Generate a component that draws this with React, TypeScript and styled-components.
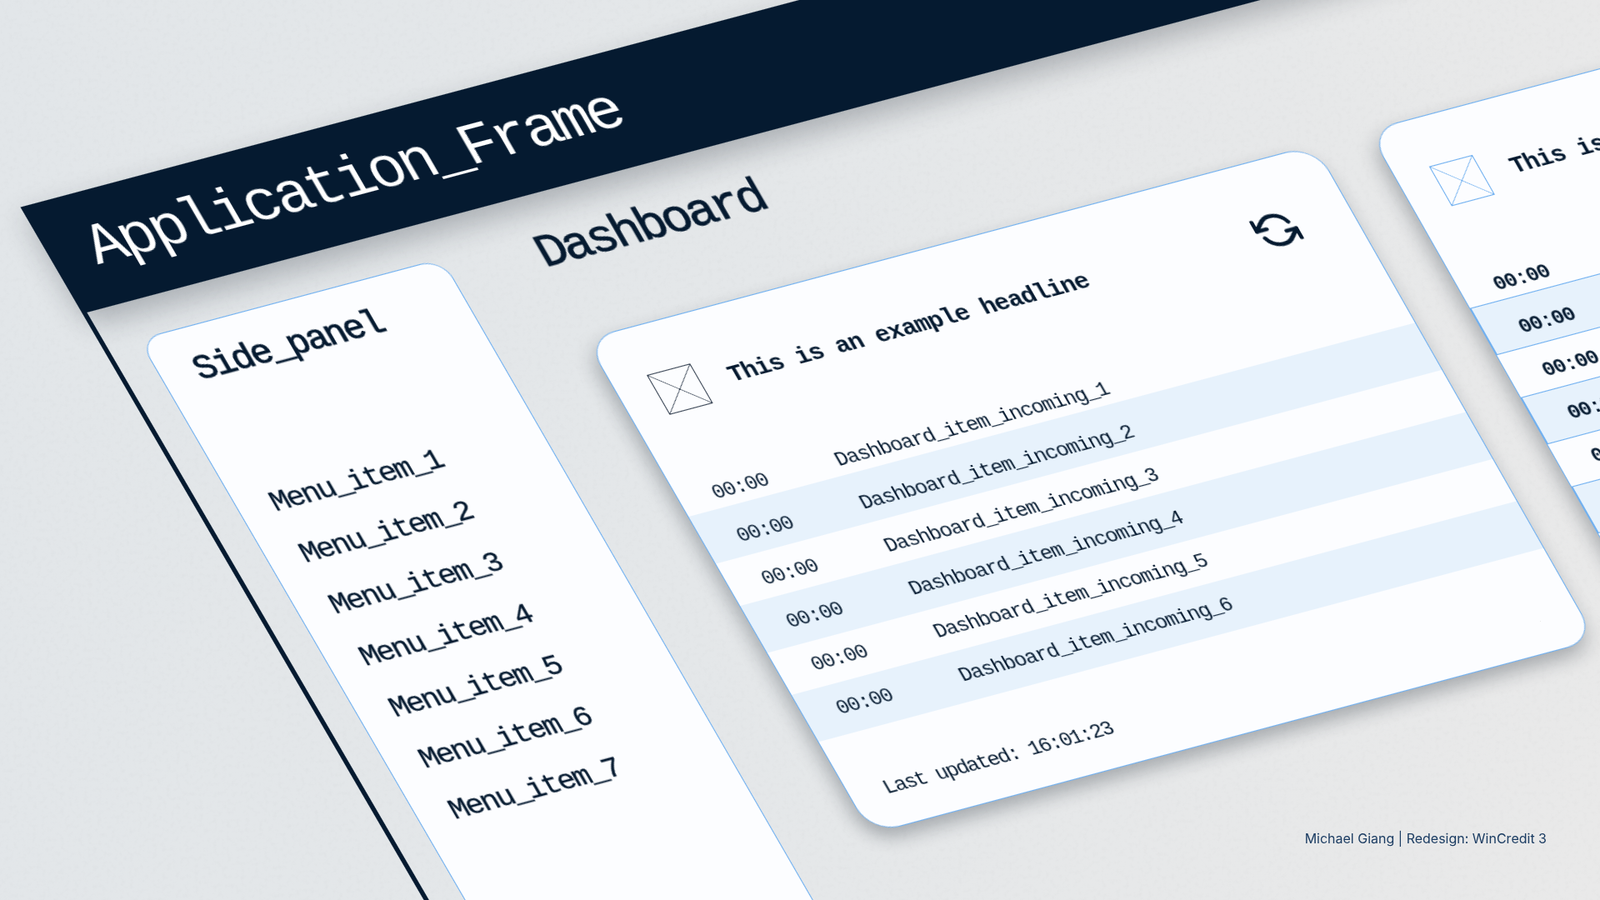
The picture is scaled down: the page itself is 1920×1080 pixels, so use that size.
import styled, { createGlobalStyle } from "styled-components";
import { FiRefreshCcw } from "react-icons/fi";

const NAVY = "#051a30";
const LINE = "#70b0f0";
const STRIPE = "#e7f2fc";
const PAPER = "#fcfdff";

// the frame's reference rectangle and where its corners land on screen
const PLANE = { w: 1270, h: 892 };
const QUAD = { tl: [24.5, 248.6], tr: [1410, -120], bl: [540, 1134], br: [1915, 766] };

const planeMatrix = () => {
  const { tl, tr, bl, br } = QUAD;
  const dx1 = tr[0] - br[0];
  const dy1 = tr[1] - br[1];
  const dx2 = bl[0] - br[0];
  const dy2 = bl[1] - br[1];
  const sx = tl[0] - tr[0] + br[0] - bl[0];
  const sy = tl[1] - tr[1] + br[1] - bl[1];
  const det = dx1 * dy2 - dx2 * dy1;
  const g = (sx * dy2 - dx2 * sy) / det;
  const h = (dx1 * sy - sx * dy1) / det;
  const a = tr[0] - tl[0] + g * tr[0];
  const b = bl[0] - tl[0] + h * bl[0];
  const d = tr[1] - tl[1] + g * tr[1];
  const e = bl[1] - tl[1] + h * bl[1];
  const { w, h: ph } = PLANE;
  const m = [a / w, d / w, 0, g / w, b / ph, e / ph, 0, h / ph, 0, 0, 1, 0, tl[0], tl[1], 0, 1];
  return `matrix3d(${m.map((v) => v.toFixed(8)).join(",")})`;
};

const menuItems = [1, 2, 3, 4, 5, 6, 7];

// stripes are taller than the white rows, and the text drifts up through them
const rows = [
  { n: 1, height: 51.5, nudge: 18 },
  { n: 2, height: 56.5, nudge: 14 },
  { n: 3, height: 51.5, nudge: 10 },
  { n: 4, height: 56.5, nudge: 6 },
  { n: 5, height: 51.5, nudge: 2 },
  { n: 6, height: 56.5, nudge: 0 },
];

function PlaceholderIcon({ color }: { color: string }) {
  return (
    <svg width="48" height="48" viewBox="0 0 48 48" fill="none" stroke={color} strokeWidth="1">
      <rect x="0.5" y="0.5" width="47" height="47" />
      <path d="M0.5 0.5L47.5 47.5M47.5 0.5L0.5 47.5" />
    </svg>
  );
}

function DashCard({ outlined }: { outlined?: boolean }) {
  return (
    <Card>
      <CardHead>
        <PlaceholderIcon color={outlined ? LINE : "#3a4656"} />
        <Headline>This is an example headline</Headline>
        <RefreshButton>
          <FiRefreshCcw size={44} strokeWidth={2.4} />
        </RefreshButton>
      </CardHead>
      <RowList>
        {rows.map(({ n, height, nudge }) => (
          <Row key={n} $striped={n % 2 === 0} $outlined={outlined} $height={height} $nudge={nudge}>
            <Time $outlined={outlined}>00:00</Time>
            <ItemName>Dashboard_item_incoming_{n}</ItemName>
          </Row>
        ))}
      </RowList>
      <Updated>Last updated: 16:01:23</Updated>
    </Card>
  );
}

export default function App() {
  return (
    <Stage>
      <GlobalStyle />
      <Grain aria-hidden="true">
        <filter id="grain">
          <feTurbulence type="fractalNoise" baseFrequency="0.18" numOctaves="4" seed="7" />
          <feColorMatrix values="0 0 0 0 0.35  0 0 0 0 0.35  0 0 0 0 0.35  0 0 0 -1.6 0.82" />
        </filter>
        <rect width="100%" height="100%" filter="url(#grain)" />
      </Grain>
      <Frame>
        <Header>
          <AppTitle>Application_Frame</AppTitle>
        </Header>
        <Body>
          <SidePanel>
            <PanelTitle>Side_panel</PanelTitle>
            <Menu>
              {menuItems.map((n) => (
                <MenuItem key={n}>Menu_item_{n}</MenuItem>
              ))}
            </Menu>
          </SidePanel>
          <Main>
            <PageTitle>Dashboard</PageTitle>
            <CardRow>
              <DashCard />
              <DashCard outlined />
            </CardRow>
          </Main>
        </Body>
      </Frame>
      <Credit>Michael Giang | Redesign: WinCredit 3</Credit>
    </Stage>
  );
}

const GlobalStyle = createGlobalStyle`
  html, body {
    margin: 0;
    padding: 0;
    overflow: hidden;
  }
`;

const Stage = styled.div`
  position: relative;
  width: 1920px;
  height: 1080px;
  overflow: hidden;
  background: linear-gradient(100deg, #e2e6e9 0%, #e4e7e9 45%, #e9e9e9 100%);
  font-family: "Liberation Mono", monospace;
  color: ${NAVY};
`;

const Grain = styled.svg`
  position: absolute;
  inset: 0;
  width: 100%;
  height: 100%;
  opacity: 0.07;
`;

const Frame = styled.div`
  width: 2500px;
  height: 1500px;
  display: flex;
  flex-direction: column;
  transform-origin: 0 0;
  transform: ${planeMatrix()};
`;

const Header = styled.header`
  flex: none;
  height: 128px;
  display: flex;
  align-items: center;
  padding-left: 42px;
  background: ${NAVY};
  box-shadow: 0 14px 30px rgba(20, 30, 40, 0.28);
`;

const AppTitle = styled.h1`
  margin: 0;
  font-size: 64px;
  letter-spacing: -4.2px;
  font-weight: 400;
  color: #ffffff;
`;

const Body = styled.div`
  flex: 1;
  display: flex;
  gap: 92px;
  padding: 42px 0 0 34px;
  border-left: 5px solid ${NAVY};
`;

const SidePanel = styled.aside`
  flex: none;
  box-sizing: border-box;
  width: 334px;
  height: 1300px;
  padding: 28px 36px;
  background: ${PAPER};
  border: 1.5px solid ${LINE};
  border-radius: 24px;
`;

const PanelTitle = styled.h2`
  margin: 0;
  font-size: 38px;
  letter-spacing: -2.4px;
  line-height: 42px;
  font-weight: 400;
  -webkit-text-stroke: 0.9px ${NAVY};
`;

const Menu = styled.nav`
  display: flex;
  flex-direction: column;
  margin: 108px 0 0 -1px;
`;

const MenuItem = styled.a`
  font-size: 32px;
  letter-spacing: -2.3px;
  line-height: 62.2px;
  -webkit-text-stroke: 0.3px ${NAVY};
`;

const Main = styled.main`
  flex: none;
  display: flex;
  flex-direction: column;
`;

const PageTitle = styled.h2`
  margin: 0 0 0 2px;
  height: 124px;
  box-sizing: border-box;
  font-size: 52px;
  letter-spacing: -3.9px;
  line-height: 50px;
  font-weight: 400;
  -webkit-text-stroke: 0.8px ${NAVY};
`;

const CardRow = styled.div`
  display: flex;
  gap: 59px;
`;

const Card = styled.section`
  flex: none;
  box-sizing: border-box;
  width: 805px;
  height: 600px;
  padding-top: 54px;
  display: flex;
  flex-direction: column;
  overflow: hidden;
  background: ${PAPER};
  border: 1.5px solid ${LINE};
  border-radius: 32px;
  box-shadow: -6px 10px 20px rgba(20, 30, 40, 0.3);
`;

const CardHead = styled.div`
  display: flex;
  align-items: center;
  gap: 31px;
  height: 48px;
  padding: 0 60px 0 38px;
`;

const Headline = styled.h3`
  flex: 1;
  margin: 0;
  font-size: 26px;
  letter-spacing: -0.95px;
  font-weight: 700;
`;

const RefreshButton = styled.div`
  display: flex;
  color: ${NAVY};
`;

const RowList = styled.div`
  margin-top: 60.5px;
  display: flex;
  flex-direction: column;
`;

const Row = styled.div<{ $striped?: boolean; $outlined?: boolean; $height: number; $nudge: number }>`
  display: flex;
  align-items: center;
  box-sizing: border-box;
  height: ${(p) => p.$height}px;
  padding: ${(p) => p.$nudge}px 0 0 36px;
  font-size: 22px;
  letter-spacing: -1.2px;
  background: ${(p) => (p.$striped ? STRIPE : "transparent")};
  border: ${(p) => (p.$striped && p.$outlined ? `1px solid ${LINE}` : "none")};
`;

const Time = styled.span<{ $outlined?: boolean }>`
  flex: none;
  width: 136px;
  font-weight: ${(p) => (p.$outlined ? 700 : 400)};
`;

const ItemName = styled.span`
  white-space: nowrap;
`;

const Updated = styled.div`
  margin-top: 57px;
  padding-left: 37px;
  font-size: 22px;
  letter-spacing: -1.75px;
  line-height: 24px;
`;

const Credit = styled.div`
  position: absolute;
  right: 64px;
  bottom: 64px;
  font-family: Inter, sans-serif;
  font-size: 16px;
  line-height: 20px;
  color: #1c3d63;
`;
